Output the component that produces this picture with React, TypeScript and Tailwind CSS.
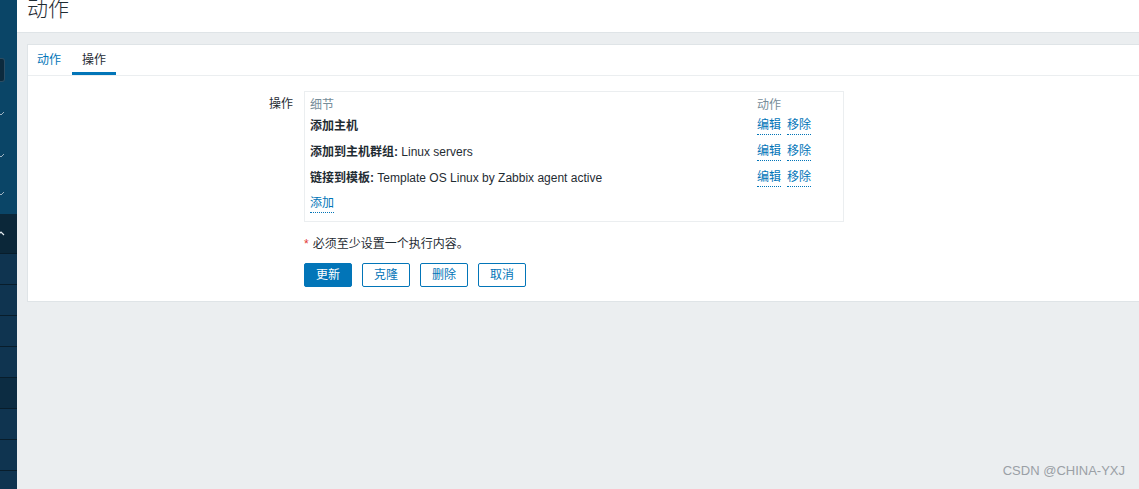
import React from "react";

const font = { fontFamily: '"Liberation Sans", Arial, "Noto Sans CJK SC", sans-serif' };

function Chevron({ up = false }: { up?: boolean }) {
  return (
    <svg width="6" height="6" viewBox="0 0 6 6" className="block shrink-0">
      {up ? (
        <path d="M-2 4 L1 1 L4 4" stroke="#e6edf2" strokeWidth="1.2" fill="none" />
      ) : (
        <path d="M-2 2 L1 5 L4 2" stroke="#9fb3c2" strokeWidth="1" fill="none" />
      )}
    </svg>
  );
}

function Sidebar() {
  const lower = [0, 1, 2, 3, 4, 5, 6, 7];
  return (
    <aside className="w-[17px] shrink-0 flex flex-col h-full overflow-hidden">
      <div className="bg-[#0a4567] h-[214px] shrink-0 flex flex-col">
        <div className="h-[58px] shrink-0" />
        <div className="h-[24px] w-[5px] shrink-0 rounded-r-[3px] bg-[#0c2a3d] border border-l-0 border-[#2c4d63]" />
        <div className="h-[28px] shrink-0" />
        <Chevron />
        <div className="h-[36px] shrink-0" />
        <Chevron />
        <div className="h-[32px] shrink-0" />
        <Chevron />
      </div>
      <div className="bg-[#0b2739] h-[39px] shrink-0 flex items-center">
        <Chevron up />
      </div>
      {lower.map((i) => (
        <div
          key={i}
          className={`h-[31px] shrink-0 border-t border-[#081d2b] ${i === 4 ? "bg-[#0c2c42]" : "bg-[#0f3450]"}`}
        />
      ))}
    </aside>
  );
}

function Link({ children }: { children: React.ReactNode }) {
  return (
    <span className="text-[#0275b8] border-b border-dotted border-[#0275b8] leading-[13px] pt-[2px] pb-[2px]">
      {children}
    </span>
  );
}

function OpRow({ label, value }: { label: string; value?: string }) {
  return (
    <div className="flex h-[26px] items-center">
      <div className="w-[447px] text-[#1f2c33]">
        <span className="font-bold">{label}</span>
        {value ? <span> {value}</span> : null}
      </div>
      <div className="flex gap-[6px]">
        <Link>编辑</Link>
        <Link>移除</Link>
      </div>
    </div>
  );
}

function Btn({ children, primary = false }: { children: React.ReactNode; primary?: boolean }) {
  return (
    <button
      className={`w-[48px] h-[24px] rounded-[2px] text-[12px] flex items-center justify-center border border-[#0275b8] ${
        primary ? "bg-[#0275b8] text-white" : "bg-white text-[#0275b8]"
      }`}
    >
      {children}
    </button>
  );
}

export default function App() {
  return (
    <div
      className="relative w-[1139px] h-[489px] overflow-hidden flex bg-[#ebeef0] text-[12px] text-[#1f2c33]"
      style={font}
    >
      <Sidebar />
      <main className="flex-1 flex flex-col min-w-0">
        <header className="h-[33px] shrink-0 bg-white border-b border-[#dfe4e7] pl-[10px] overflow-hidden">
          <h1 className="text-[21px] font-light leading-[21px] mt-[-2px] text-[#1f2c33]">动作</h1>
        </header>
        <div className="ml-[10px] mr-[-10px] mt-[11px] h-[258px] bg-white border border-[#dfe4e7] flex flex-col">
          <div className="flex h-[31px] border-b border-[#ebeef0]">
            <div className="pl-[9px] pr-[11px] h-full flex items-center text-[#0275b8]">动作</div>
            <div className="px-[10px] h-full flex items-center border-b-[3px] border-[#0275b8] pt-[2px] mb-[-1px]">
              操作
            </div>
          </div>
          <div className="flex pt-[15px]">
            <div className="w-[265px] text-right pt-[4px]">操作</div>
            <div className="ml-[11px] flex flex-col">
              <div className="w-[540px] h-[131px] border border-[#ebeef0] pl-[5px]">
                <div className="h-[21px] pt-[4px] flex items-center text-[#768d99]">
                  <div className="w-[447px]">细节</div>
                  <div>动作</div>
                </div>
                <OpRow label="添加主机" />
                <OpRow label="添加到主机群组:" value="Linux servers" />
                <OpRow label="链接到模板:" value="Template OS Linux by Zabbix agent active" />
                <div className="h-[26px] flex items-center">
                  <Link>添加</Link>
                </div>
              </div>
              <div className="mt-[15px] h-[14px] flex items-center">
                <span className="text-[#e33734] mr-[4px]">*</span>
                <span>必须至少设置一个执行内容。</span>
              </div>
              <div className="mt-[12px] flex gap-[10px]">
                <Btn primary>更新</Btn>
                <Btn>克隆</Btn>
                <Btn>删除</Btn>
                <Btn>取消</Btn>
              </div>
            </div>
          </div>
        </div>
      </main>
      <div className="absolute right-[14px] bottom-[9px] text-[13px] text-[#9aa0a6]">
        CSDN @CHINA-YXJ
      </div>
    </div>
  );
}
